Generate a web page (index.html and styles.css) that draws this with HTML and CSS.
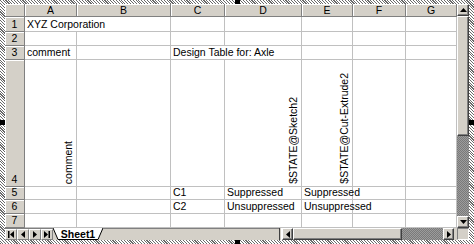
FILE: index.html
```html
<!DOCTYPE html>
<html lang="en">

<head>
    <meta charset="UTF-8">
    <title>Design Table</title>
    <link rel="stylesheet" href="styles.css">
</head>

<body>

    <div class="frame">
        <div class="handle h-top"></div>
        <div class="handle h-bottom"></div>
        <div class="handle h-left"></div>
        <div class="handle h-right"></div>

        <div class="main">
            <div class="sheet">
                <div class="corner"></div>
                <div class="colhead">A</div>
                <div class="colhead">B</div>
                <div class="colhead">C</div>
                <div class="colhead">D</div>
                <div class="colhead">E</div>
                <div class="colhead">F</div>
                <div class="colhead">G</div>

                <div class="rowhead">1</div>
                <div class="cell span2">XYZ Corporation</div>
                <div class="cell"></div>
                <div class="cell"></div>
                <div class="cell"></div>
                <div class="cell"></div>
                <div class="cell"></div>

                <div class="rowhead">2</div>
                <div class="cell"></div>
                <div class="cell"></div>
                <div class="cell"></div>
                <div class="cell"></div>
                <div class="cell"></div>
                <div class="cell"></div>
                <div class="cell"></div>

                <div class="rowhead">3</div>
                <div class="cell">comment</div>
                <div class="cell"></div>
                <div class="cell span2">Design Table for: Axle</div>
                <div class="cell"></div>
                <div class="cell"></div>
                <div class="cell"></div>

                <div class="rowhead">4</div>
                <div class="cell vert"><span>comment</span></div>
                <div class="cell"></div>
                <div class="cell"></div>
                <div class="cell vert"><span>$STATE@Sketch2</span></div>
                <div class="cell vert"><span>$STATE@Cut-Extrude2</span></div>
                <div class="cell"></div>
                <div class="cell"></div>

                <div class="rowhead">5</div>
                <div class="cell"></div>
                <div class="cell"></div>
                <div class="cell">C1</div>
                <div class="cell">Suppressed</div>
                <div class="cell">Suppressed</div>
                <div class="cell"></div>
                <div class="cell"></div>

                <div class="rowhead">6</div>
                <div class="cell"></div>
                <div class="cell"></div>
                <div class="cell">C2</div>
                <div class="cell">Unsuppressed</div>
                <div class="cell">Unsuppressed</div>
                <div class="cell"></div>
                <div class="cell"></div>

                <div class="rowhead">7</div>
                <div class="cell"></div>
                <div class="cell"></div>
                <div class="cell"></div>
                <div class="cell"></div>
                <div class="cell"></div>
                <div class="cell"></div>
                <div class="cell"></div>
            </div>

            <div class="vscroll">
                <div class="btn">
                    <svg width="7" height="4" viewBox="0 0 7 4"><path d="M3.5 0 L7 4 L0 4 Z" fill="#000"/></svg>
                </div>
                <div class="vthumb"></div>
                <div class="track"></div>
                <div class="btn">
                    <svg width="7" height="4" viewBox="0 0 7 4"><path d="M0 0 L7 0 L3.5 4 Z" fill="#000"/></svg>
                </div>
            </div>
        </div>

        <div class="bottom">
            <div class="tabs">
                <div class="nav">
                    <svg width="6" height="7" viewBox="0 0 6 7"><path d="M0 0 H1.5 V7 H0 Z M6 0 V7 L2 3.5 Z" fill="#000"/></svg>
                </div>
                <div class="nav">
                    <svg width="4" height="7" viewBox="0 0 4 7"><path d="M4 0 V7 L0 3.5 Z" fill="#000"/></svg>
                </div>
                <div class="nav">
                    <svg width="4" height="7" viewBox="0 0 4 7"><path d="M0 0 V7 L4 3.5 Z" fill="#000"/></svg>
                </div>
                <div class="nav">
                    <svg width="6" height="7" viewBox="0 0 6 7"><path d="M0 0 V7 L4 3.5 Z M4.5 0 H6 V7 H4.5 Z" fill="#000"/></svg>
                </div>
                <div class="tab">
                    <svg class="tabshape" width="50" height="12" viewBox="0 0 50 12">
                        <path d="M0 0 L5 11.5 L45 11.5 L50 0" fill="#fff" stroke="#000" stroke-width="1"/>
                    </svg>
                    <span>Sheet1</span>
                </div>
            </div>
            <div class="hscroll">
                <div class="split"></div>
                <div class="btn hbtn">
                    <svg width="4" height="7" viewBox="0 0 4 7"><path d="M4 0 V7 L0 3.5 Z" fill="#000"/></svg>
                </div>
                <div class="hthumb"></div>
                <div class="track"></div>
                <div class="btn hbtn">
                    <svg width="4" height="7" viewBox="0 0 4 7"><path d="M0 0 V7 L4 3.5 Z" fill="#000"/></svg>
                </div>
                <div class="gap"></div>
            </div>
            <div class="sizer"></div>
        </div>
    </div>

</body>

</html>
```

FILE: styles.css
```css
* {
    margin: 0;
    padding: 0;
    box-sizing: border-box;
}

body {
    font-family: "Liberation Sans", Arial, sans-serif;
    font-size: 10.5px;
    color: #000;
    background: #fff;
}

.frame {
    position: relative;
    width: 474px;
    height: 244px;
    padding: 4px 5px 4px 5px;
    display: flex;
    flex-direction: column;
    background: repeating-linear-gradient(45deg, #6a6a6a 0 0.8px, #fff 0.8px 2px);
}

.handle {
    position: absolute;
    width: 5px;
    height: 4px;
    background: #000;
}

.h-top { top: 0; left: 235px; }
.h-bottom { bottom: 0; left: 235px; }
.h-left { left: 0; top: 120px; height: 5px; }
.h-right { right: 0; top: 120px; height: 5px; }

.main {
    display: flex;
    height: 224px;
}

.sheet {
    display: grid;
    grid-template-columns: 20px 52px 94px 54px 77px 51px 53px 51px;
    grid-template-rows: 13px 15px 14px 14px 127px 13px 14px 14px;
    width: 452px;
    background: #fff;
    overflow: hidden;
}

.corner,
.colhead,
.rowhead {
    background: #d4d0c8;
    border-right: 1px solid #808080;
    border-bottom: 1px solid #808080;
    box-shadow: inset 1px 1px 0 #fff;
    display: flex;
    justify-content: center;
    align-items: flex-end;
    line-height: 11px;
    color: #000;
}

.rowhead {
    padding-bottom: 1px;
}

.cell {
    border-right: 1px solid #c0c0c0;
    border-bottom: 1px solid #c0c0c0;
    display: flex;
    align-items: flex-end;
    padding: 0 0 1px 2px;
    line-height: 11px;
    white-space: nowrap;
}

.span2 {
    grid-column: span 2;
}

.vert {
    justify-content: flex-end;
    padding: 0 2px 2px 0;
}

.vert span {
    writing-mode: vertical-rl;
    transform: rotate(180deg);
    line-height: 12px;
}

.vscroll {
    width: 12px;
    display: flex;
    flex-direction: column;
    background: #d4d0c8;
}

.btn {
    background: #d4d0c8;
    border: 1px solid;
    border-color: #fff #404040 #404040 #fff;
    box-shadow: inset -1px -1px 0 #808080;
    display: flex;
    align-items: center;
    justify-content: center;
}

.vscroll .btn {
    height: 12px;
}

.vthumb {
    height: 120px;
    background: #d4d0c8;
    border: 1px solid;
    border-color: #fff #404040 #404040 #fff;
    box-shadow: inset -1px -1px 0 #808080;
}

.track {
    flex: 1;
    background: repeating-conic-gradient(#7a7a7a 0 25%, #9c9c9c 0 50%) 0 0 / 2px 2px;
}

.bottom {
    display: flex;
    height: 12px;
}

.tabs {
    width: 274px;
    display: flex;
    background: #d4d0c8;
    border-top: 1px solid #808080;
}

.nav {
    width: 12px;
    height: 11px;
    background: #d4d0c8;
    border: 1px solid;
    border-color: #fff #808080 #808080 #fff;
    display: flex;
    align-items: center;
    justify-content: center;
}

.tab {
    position: relative;
    width: 50px;
    height: 12px;
    margin-top: -1px;
    display: flex;
    justify-content: center;
    align-items: center;
    font-weight: bold;
    font-size: 10.5px;
}

.tabshape {
    position: absolute;
    top: 0;
    left: 0;
}

.tab span {
    position: relative;
    line-height: 11px;
}

.hscroll {
    width: 178px;
    display: flex;
    background: #d4d0c8;
}

.split {
    width: 3px;
    background: #d4d0c8;
    border-left: 1px solid #404040;
    border-right: 1px solid #fff;
}

.hbtn {
    width: 11px;
}

.hthumb {
    width: 109px;
    background: #d4d0c8;
    border: 1px solid;
    border-color: #fff #404040 #404040 #fff;
    box-shadow: inset -1px -1px 0 #808080;
}

.hscroll .track {
    flex: none;
    width: 41px;
}

.gap {
    flex: 1;
    background: #d4d0c8;
}

.sizer {
    width: 12px;
    background: #d4d0c8;
    border: 1px solid;
    border-color: #808080 #fff #fff #808080;
}
```
